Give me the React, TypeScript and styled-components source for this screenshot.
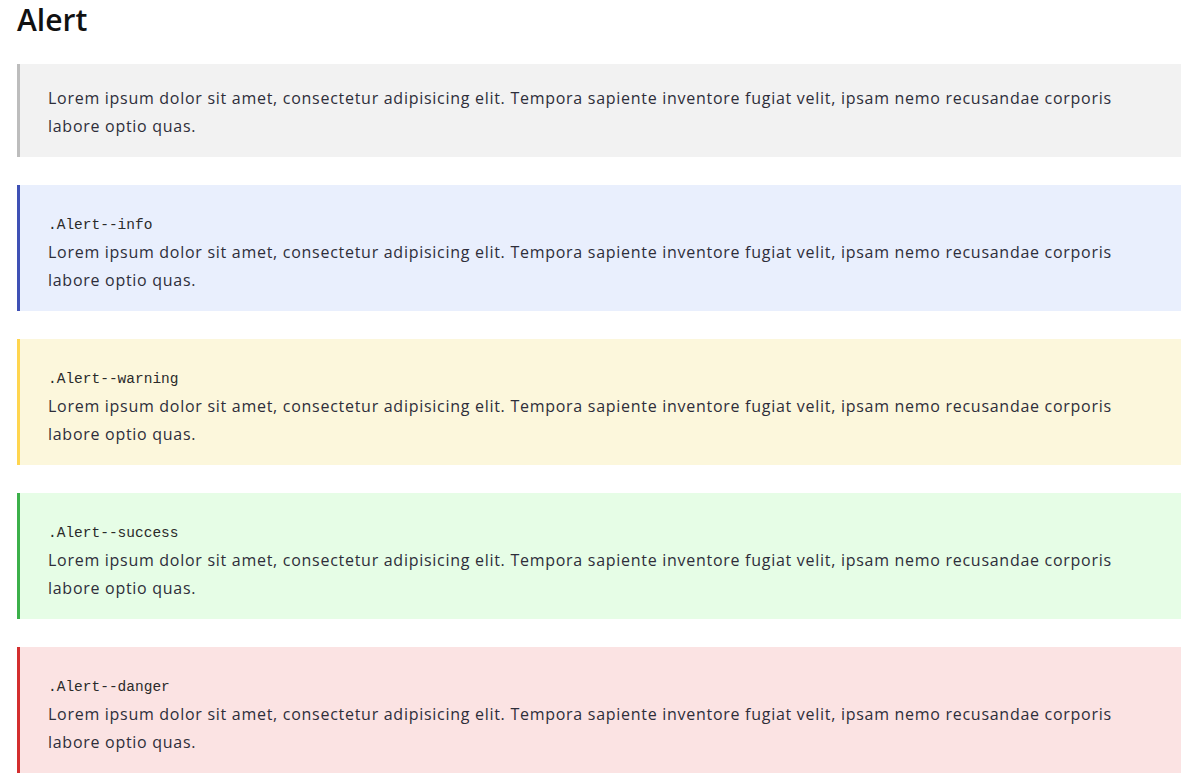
import React from "react";
import styled, { createGlobalStyle } from "styled-components";

const GlobalStyle = createGlobalStyle`
  html, body {
    margin: 0;
    padding: 0;
    background: #ffffff;
  }
  body {
    font-family: "Open Sans", "Noto Sans", sans-serif;
    color: #2b2b2b;
  }
`;

type Variant = "default" | "info" | "warning" | "success" | "danger";

const palette: Record<Variant, { bg: string; border: string }> = {
  default: { bg: "#f2f2f2", border: "#bdbdbd" },
  info: { bg: "#e9effd", border: "#3f51b5" },
  warning: { bg: "#fcf7dc", border: "#ffd54f" },
  success: { bg: "#e6fde6", border: "#3cb04a" },
  danger: { bg: "#fbe3e3", border: "#d32f2f" },
};

const Page = styled.main`
  display: flex;
  flex-direction: column;
  gap: 28px;
  padding: 0 5px 20px 17px;
`;

const Title = styled.h1`
  margin: 0;
  padding-top: 3px;
  font-family: "Open Sans", "Noto Sans", sans-serif;
  font-size: 30px;
  font-weight: 600;
  line-height: 33px;
  color: #111111;
`;

const AlertBox = styled.div<{ $variant: Variant }>`
  display: flex;
  flex-direction: column;
  background: ${(p) => palette[p.$variant].bg};
  border-left: 3px solid ${(p) => palette[p.$variant].border};
  padding: 20px 50px 17px 28px;
`;

const Label = styled.code`
  display: block;
  margin: 10px 0 3px;
  font-family: "Liberation Mono", "DejaVu Sans Mono", monospace;
  font-size: 14.5px;
  line-height: 20px;
  color: #2a2a2a;
`;

const Text = styled.p`
  margin: 0;
  font-size: 16px;
  letter-spacing: 0.72px;
  line-height: 28px;
  color: #2e2e3a;
`;

const lorem =
  "Lorem ipsum dolor sit amet, consectetur adipisicing elit. Tempora sapiente inventore fugiat velit, ipsam nemo recusandae corporis labore optio quas.";

const alerts: { variant: Variant; label?: string }[] = [
  { variant: "default" },
  { variant: "info", label: ".Alert--info" },
  { variant: "warning", label: ".Alert--warning" },
  { variant: "success", label: ".Alert--success" },
  { variant: "danger", label: ".Alert--danger" },
];

export default function App() {
  return (
    <>
      <GlobalStyle />
      <Page>
        <Title>Alert</Title>
        {alerts.map((a) => (
          <AlertBox key={a.variant} $variant={a.variant}>
            {a.label && <Label>{a.label}</Label>}
            <Text>{lorem}</Text>
          </AlertBox>
        ))}
      </Page>
    </>
  );
}
